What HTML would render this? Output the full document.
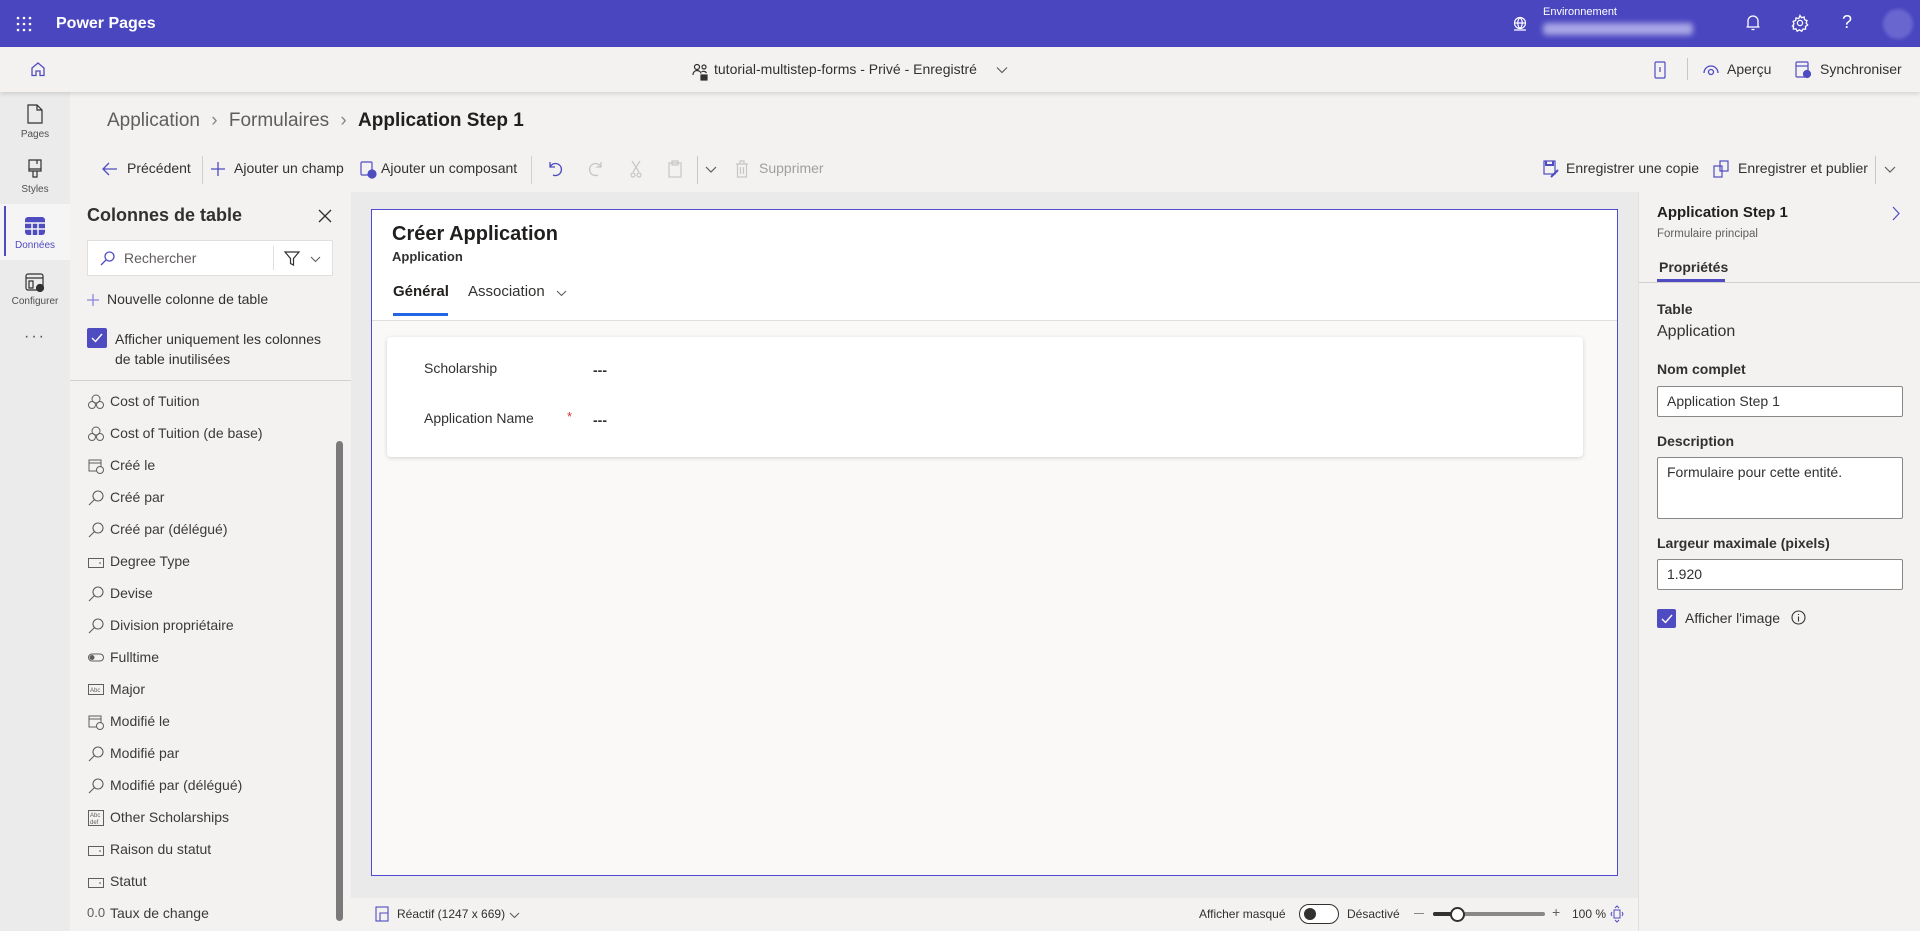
<!DOCTYPE html>
<html><head><meta charset="utf-8"><style>
*{box-sizing:border-box;margin:0;padding:0}
body{width:1920px;height:931px;overflow:hidden;font-family:"Liberation Sans",Arial,sans-serif;background:#f3f2f1;color:#323130;position:relative}
.a{position:absolute;white-space:nowrap}
.top{left:0;top:0;width:1920px;height:47px;background:#4a46c0}
.bar2{left:0;top:47px;width:1920px;height:45px;background:#f3f2f1;box-shadow:0 2px 4px rgba(0,0,0,.12);z-index:2}
.rail{left:0;top:92px;width:70px;height:839px;background:#ebebeb}
.rl{font-size:10px;color:#505050;width:70px;text-align:center;left:0}
.tb{font-size:14px;color:#323130;top:160px}
.li{font-size:14px;color:#3b3a39;left:110px}
.lic{left:88px}
.lab{font-size:14px;font-weight:bold;color:#323130;left:1657px}
.inp{left:1657px;width:246px;background:#fff;border:1px solid #8a8886;border-radius:2px;font-size:14px;color:#323130;padding:0 9px}
svg{position:absolute;overflow:visible}
</style></head><body>
<!-- top bar -->
<div class="a top"></div>
<svg style="left:16px;top:16px" width="16" height="16"><g fill="#fff"><circle cx="2" cy="2" r="1.3"/><circle cx="8" cy="2" r="1.3"/><circle cx="14" cy="2" r="1.3"/><circle cx="2" cy="8" r="1.3"/><circle cx="8" cy="8" r="1.3"/><circle cx="14" cy="8" r="1.3"/><circle cx="2" cy="14" r="1.3"/><circle cx="8" cy="14" r="1.3"/><circle cx="14" cy="14" r="1.3"/></g></svg>
<div class="a" style="left:56px;top:15px;font-size:16px;font-weight:bold;color:#fff">Power Pages</div>
<svg style="left:1512px;top:16px" width="16" height="16" fill="none" stroke="#fff" stroke-width="1.2"><circle cx="8" cy="7" r="5.5"/><path d="M2.5 7h11M8 1.5c-3 3-3 8 0 11M8 1.5c3 3 3 8 0 11M2 14h12"/></svg>
<div class="a" style="left:1543px;top:6px;font-size:11px;color:#fff">Environnement</div>
<div class="a" style="left:1543px;top:23px;width:150px;height:12px;background:#a9a6e6;filter:blur(3px);border-radius:4px"></div>
<svg style="left:1745px;top:14px" width="16" height="18" fill="none" stroke="#fff" stroke-width="1.3"><path d="M3 13V7a5 5 0 0 1 10 0v6zM1.5 13h13M6.5 15.5h3"/></svg>
<svg style="left:1791px;top:14px" width="18" height="18" fill="none" stroke="#fff" stroke-width="1.3"><circle cx="9" cy="9" r="2.6"/><path d="M9 1.5l1.5 2.2 2.6-.7.4 2.6 2.5 1-.9 2.4 1.6 2-2.2 1.4.1 2.7-2.6-.1-1.3 2.3-2.2-1.5-2.3 1.4-1.2-2.4-2.7.1.2-2.7L1.5 12l1.5-2.1-.9-2.5 2.5-.9.4-2.6 2.7.7z"/></svg>
<div class="a" style="left:1842px;top:12px;font-size:18px;color:#fff">?</div>
<div class="a" style="left:1883px;top:9px;width:30px;height:30px;border-radius:50%;background:#6a66d0;filter:blur(1.5px)"></div>
<!-- second bar -->
<div class="a bar2"></div>
<svg style="left:30px;top:61px;z-index:3" width="16" height="16" fill="none" stroke="#4f4bc0" stroke-width="1.3"><path d="M2 7l6-5 6 5v7.5H10V10H6v4.5H2z"/></svg>
<svg style="left:692px;top:63px;z-index:3" width="16" height="18" fill="none" stroke="#323130" stroke-width="1.2"><circle cx="5" cy="4" r="2.5"/><circle cx="12" cy="4" r="2"/><path d="M1 12c0-3 2-4.5 4-4.5s4 1.5 4 3M9.5 9c1-1 4-1 5 1"/><rect x="9" y="12" width="6" height="5" fill="#323130"/></svg>
<div class="a" style="left:714px;top:61px;font-size:14px;color:#323130;z-index:3">tutorial-multistep-forms - Privé - Enregistré</div>
<svg style="left:996px;top:66px;z-index:3" width="12" height="8" fill="none" stroke="#605e5c" stroke-width="1.2"><path d="M1 1.5l5 5 5-5"/></svg>
<svg style="left:1654px;top:61px;z-index:3" width="12" height="18" fill="none" stroke="#4f4bc0" stroke-width="1.2"><rect x="1" y="1" width="10" height="16" rx="1"/><path d="M6 6v5"/></svg>
<div class="a" style="left:1687px;top:58px;width:1px;height:22px;background:#c8c6c4;z-index:3"></div>
<svg style="left:1703px;top:63px;z-index:3" width="16" height="12" fill="none" stroke="#4f4bc0" stroke-width="1.3"><path d="M1 10a7 7 0 0 1 14 0"/><circle cx="8" cy="9" r="2.5"/></svg>
<div class="a" style="left:1727px;top:61px;font-size:14px;z-index:3">Aperçu</div>
<svg style="left:1795px;top:61px;z-index:3" width="16" height="18" fill="none" stroke="#4f4bc0" stroke-width="1.2"><rect x="1" y="1" width="12" height="15" rx="1"/><path d="M1 5h12"/><circle cx="12" cy="13" r="3.5" fill="#4f4bc0"/></svg>
<div class="a" style="left:1820px;top:61px;font-size:14px;z-index:3">Synchroniser</div>
<!-- rail -->
<div class="a rail"></div>
<svg style="left:27px;top:104px" width="16" height="20" fill="none" stroke="#323130" stroke-width="1.2"><path d="M1 1h9l5 5v13H1zM10 1v5h5"/></svg>
<div class="a rl" style="top:129px">Pages</div>
<svg style="left:27px;top:159px" width="16" height="20" fill="none" stroke="#323130" stroke-width="1.2"><path d="M2 1h12v9H2zM2 10v2h12v-2M6 12v6h4v-6M10 1v4"/></svg>
<div class="a rl" style="top:184px">Styles</div>
<div class="a" style="left:0;top:204px;width:70px;height:56px;background:#f5f5f5"></div>
<div class="a" style="left:4px;top:206px;width:2px;height:50px;background:#4f4bc0"></div>
<svg style="left:25px;top:217px" width="20" height="18"><rect x="0" y="0" width="20" height="18" rx="3" fill="#4f4bc0"/><path d="M0 6h20M0 12h20M7 6v12M13 6v12" stroke="#f5f5f5" stroke-width="1.5"/></svg>
<div class="a rl" style="top:240px;color:#4f4bc0">Données</div>
<svg style="left:25px;top:273px" width="20" height="20" fill="none" stroke="#323130" stroke-width="1.2"><rect x="1" y="1" width="17" height="16" rx="2"/><path d="M1 5h17M4 8h4v7H4z"/><circle cx="15" cy="15" r="3.5" fill="#323130"/></svg>
<div class="a rl" style="top:296px">Configurer</div>
<div class="a rl" style="top:328px;font-size:16px;letter-spacing:2px">···</div>
<!-- breadcrumb -->
<div class="a" style="left:107px;top:110px;font-size:19px;color:#605e5c">Application <span style="color:#8a8886;padding:0 6px">›</span> Formulaires <span style="color:#8a8886;padding:0 6px">›</span> <span style="color:#201f1e;font-weight:bold">Application Step 1</span></div>
<!-- toolbar -->
<svg style="left:102px;top:162px" width="16" height="14" fill="none" stroke="#4f4bc0" stroke-width="1.3"><path d="M15 7H1M7 1L1 7l6 6"/></svg>
<div class="a tb" style="left:127px">Précédent</div>
<div class="a" style="left:202px;top:156px;width:1px;height:28px;background:#d2d0ce"></div>
<svg style="left:211px;top:162px" width="14" height="14" stroke="#4f4bc0" stroke-width="1.3"><path d="M7 0v14M0 7h14"/></svg>
<div class="a tb" style="left:234px">Ajouter un champ</div>
<svg style="left:360px;top:161px" width="16" height="17" fill="none" stroke="#4f4bc0" stroke-width="1.2"><rect x="1" y="1" width="11" height="13" rx="1"/><circle cx="12" cy="13" r="4" fill="#4f4bc0"/></svg>
<div class="a tb" style="left:381px">Ajouter un composant</div>
<div class="a" style="left:531px;top:156px;width:1px;height:28px;background:#d2d0ce"></div>
<svg style="left:548px;top:161px" width="14" height="16" fill="none" stroke="#4f4bc0" stroke-width="1.3"><path d="M2 1v5h5M2 6a6 6 0 1 1 3 8"/></svg>
<svg style="left:589px;top:161px" width="14" height="16" fill="none" stroke="#c8c6c4" stroke-width="1.3"><path d="M12 1v5H7M12 6a6 6 0 1 0-3 8"/></svg>
<svg style="left:630px;top:160px" width="12" height="18" fill="none" stroke="#c8c6c4" stroke-width="1.2"><path d="M2 1l7 11M10 1L3 12"/><circle cx="3" cy="15" r="2"/><circle cx="9" cy="15" r="2"/></svg>
<svg style="left:668px;top:160px" width="14" height="18" fill="none" stroke="#c8c6c4" stroke-width="1.2"><rect x="1" y="3" width="12" height="14"/><rect x="4" y="1" width="6" height="4"/></svg>
<div class="a" style="left:697px;top:156px;width:1px;height:28px;background:#c8c6c4"></div>
<svg style="left:705px;top:166px" width="12" height="8" fill="none" stroke="#605e5c" stroke-width="1.2"><path d="M1 1l5 5 5-5"/></svg>
<svg style="left:735px;top:160px" width="14" height="18" fill="none" stroke="#c8c6c4" stroke-width="1.2"><path d="M1 4h12M5 4V1h4v3M2.5 4v13h9V4M5.5 7v7M8.5 7v7"/></svg>
<div class="a tb" style="left:759px;color:#a19f9d">Supprimer</div>
<svg style="left:1543px;top:160px" width="16" height="18" fill="none" stroke="#4f4bc0" stroke-width="1.2"><rect x="1" y="1" width="11" height="13"/><path d="M3 1v4h7V1M8 17l7-7" stroke-width="2"/></svg>
<div class="a tb" style="left:1566px">Enregistrer une copie</div>
<svg style="left:1713px;top:160px" width="16" height="18" fill="none" stroke="#4f4bc0" stroke-width="1.2"><rect x="1" y="6" width="8" height="11"/><rect x="7" y="1" width="8" height="10"/></svg>
<div class="a tb" style="left:1738px">Enregistrer et publier</div>
<div class="a" style="left:1875px;top:156px;width:1px;height:28px;background:#c8c6c4"></div>
<svg style="left:1884px;top:166px" width="12" height="8" fill="none" stroke="#605e5c" stroke-width="1.2"><path d="M1 1l5 5 5-5"/></svg>
<!-- left panel -->
<div class="a" style="left:70px;top:192px;width:281px;height:739px;background:#f3f2f1"></div>
<div class="a" style="left:87px;top:205px;font-size:18px;font-weight:bold;color:#323130">Colonnes de table</div>
<svg style="left:319px;top:210px" width="12" height="12" stroke="#323130" stroke-width="1.3"><path d="M0 0l12 12M12 0L0 12"/></svg>
<div class="a" style="left:87px;top:240px;width:246px;height:36px;background:#fff;border:1px solid #e1dfdd"></div>
<svg style="left:100px;top:251px" width="15" height="15" fill="none" stroke="#4f4bc0" stroke-width="1.3"><circle cx="9.5" cy="5.5" r="4.5"/><path d="M6 9l-5 5"/></svg>
<div class="a" style="left:124px;top:250px;font-size:14px;color:#605e5c">Rechercher</div>
<div class="a" style="left:273px;top:246px;width:1px;height:24px;background:#e1dfdd"></div>
<svg style="left:284px;top:251px" width="16" height="15" fill="none" stroke="#323130" stroke-width="1.2"><path d="M1 1h14l-5.5 6.5V14l-3-1.5V7.5z"/></svg>
<svg style="left:310px;top:256px" width="11" height="7" fill="none" stroke="#605e5c" stroke-width="1.1"><path d="M1 1l4.5 4.5L10 1"/></svg>
<svg style="left:87px;top:294px" width="12" height="12" stroke="#8a86dd" stroke-width="1.3"><path d="M6 0v12M0 6h12"/></svg>
<div class="a" style="left:107px;top:291px;font-size:14px">Nouvelle colonne de table</div>
<div class="a" style="left:87px;top:328px;width:20px;height:20px;background:#4f4bc0;border-radius:2px"></div>
<svg style="left:91px;top:333px" width="12" height="10" fill="none" stroke="#fff" stroke-width="1.4"><path d="M1 5l3.5 3.5L11 1"/></svg>
<div class="a" style="left:115px;top:329px;font-size:14px;line-height:20px">Afficher uniquement les colonnes<br>de table inutilisées</div>
<div class="a" style="left:70px;top:380px;width:281px;height:1px;background:#d2d0ce"></div>
<div class="a" style="left:336px;top:441px;width:7px;height:480px;background:#7a7a7a;border-radius:4px"></div>
<!-- list -->
<div class="a li" style="top:393px">Cost of Tuition</div>
<div class="a li" style="top:425px">Cost of Tuition (de base)</div>
<div class="a li" style="top:457px">Créé le</div>
<div class="a li" style="top:489px">Créé par</div>
<div class="a li" style="top:521px">Créé par (délégué)</div>
<div class="a li" style="top:553px">Degree Type</div>
<div class="a li" style="top:585px">Devise</div>
<div class="a li" style="top:617px">Division propriétaire</div>
<div class="a li" style="top:649px">Fulltime</div>
<div class="a li" style="top:681px">Major</div>
<div class="a li" style="top:713px">Modifié le</div>
<div class="a li" style="top:745px">Modifié par</div>
<div class="a li" style="top:777px">Modifié par (délégué)</div>
<div class="a li" style="top:809px">Other Scholarships</div>
<div class="a li" style="top:841px">Raison du statut</div>
<div class="a li" style="top:873px">Statut</div>
<div class="a li" style="top:905px">Taux de change</div>
<svg class="lic" style="left:88px;top:394px" width="16" height="16" fill="none" stroke="#605e5c" stroke-width="1"><circle cx="8" cy="5" r="4"/><circle cx="4" cy="11" r="3.5"/><circle cx="12" cy="11" r="3.5"/></svg>
<svg style="left:88px;top:426px" width="16" height="16" fill="none" stroke="#605e5c" stroke-width="1"><circle cx="8" cy="5" r="4"/><circle cx="4" cy="11" r="3.5"/><circle cx="12" cy="11" r="3.5"/></svg>
<svg style="left:88px;top:458px" width="16" height="16" fill="none" stroke="#605e5c" stroke-width="1"><rect x="1" y="2" width="12" height="11"/><path d="M1 5h12"/><circle cx="12" cy="12" r="3.5" fill="#f3f2f1"/></svg>
<svg style="left:88px;top:490px" width="16" height="16" fill="none" stroke="#605e5c" stroke-width="1.1"><circle cx="10" cy="6" r="5"/><path d="M6.5 9.5L1 15"/></svg>
<svg style="left:88px;top:522px" width="16" height="16" fill="none" stroke="#605e5c" stroke-width="1.1"><circle cx="10" cy="6" r="5"/><path d="M6.5 9.5L1 15"/></svg>
<svg style="left:88px;top:557px" width="16" height="12" fill="none" stroke="#605e5c" stroke-width="1"><rect x="0.5" y="1.5" width="15" height="9"/><path d="M11 6h2"/></svg>
<svg style="left:88px;top:586px" width="16" height="16" fill="none" stroke="#605e5c" stroke-width="1.1"><circle cx="10" cy="6" r="5"/><path d="M6.5 9.5L1 15"/></svg>
<svg style="left:88px;top:618px" width="16" height="16" fill="none" stroke="#605e5c" stroke-width="1.1"><circle cx="10" cy="6" r="5"/><path d="M6.5 9.5L1 15"/></svg>
<svg style="left:88px;top:653px" width="16" height="10" fill="none" stroke="#605e5c" stroke-width="1"><rect x="0.5" y="1" width="15" height="7" rx="3.5"/><circle cx="4" cy="4.5" r="2" fill="#605e5c"/></svg>
<svg style="left:88px;top:684px" width="16" height="12"><rect x="0.5" y="0.5" width="15" height="10" fill="none" stroke="#605e5c"/><text x="2" y="8" font-size="6" fill="#605e5c" font-family="Liberation Sans">Abc</text></svg>
<svg style="left:88px;top:714px" width="16" height="16" fill="none" stroke="#605e5c" stroke-width="1"><rect x="1" y="2" width="12" height="11"/><path d="M1 5h12"/><circle cx="12" cy="12" r="3.5" fill="#f3f2f1"/></svg>
<svg style="left:88px;top:746px" width="16" height="16" fill="none" stroke="#605e5c" stroke-width="1.1"><circle cx="10" cy="6" r="5"/><path d="M6.5 9.5L1 15"/></svg>
<svg style="left:88px;top:778px" width="16" height="16" fill="none" stroke="#605e5c" stroke-width="1.1"><circle cx="10" cy="6" r="5"/><path d="M6.5 9.5L1 15"/></svg>
<svg style="left:88px;top:810px" width="16" height="16"><rect x="0.5" y="0.5" width="15" height="15" fill="none" stroke="#605e5c"/><text x="2" y="7" font-size="6" fill="#605e5c" font-family="Liberation Sans">Abc</text><text x="2" y="14" font-size="6" fill="#605e5c" font-family="Liberation Sans">def</text></svg>
<svg style="left:88px;top:845px" width="16" height="12" fill="none" stroke="#605e5c" stroke-width="1"><rect x="0.5" y="1.5" width="15" height="9"/><path d="M11 6h2"/></svg>
<svg style="left:88px;top:877px" width="16" height="12" fill="none" stroke="#605e5c" stroke-width="1"><rect x="0.5" y="1.5" width="15" height="9"/><path d="M11 6h2"/></svg>
<div class="a" style="left:87px;top:905px;font-size:13px;color:#605e5c">0.0</div>
<!-- canvas -->
<div class="a" style="left:351px;top:192px;width:1287px;height:706px;background:#eaeaea"></div>
<div class="a" style="left:371px;top:209px;width:1247px;height:667px;background:#faf9f8;border:1px solid #4f4bd0"></div>
<div class="a" style="left:372px;top:210px;width:1245px;height:111px;background:#fff;border-bottom:1px solid #e1dfdd"></div>
<div class="a" style="left:392px;top:223px;font-size:20px;font-weight:bold;color:#201f1e">Créer Application</div>
<div class="a" style="left:392px;top:249px;font-size:13px;font-weight:bold;color:#323130">Application</div>
<div class="a" style="left:393px;top:283px;font-size:15px;color:#201f1e;font-weight:bold">Général</div>
<div class="a" style="left:393px;top:313px;width:55px;height:3px;background:#2266e3"></div>
<div class="a" style="left:468px;top:283px;font-size:15px;color:#323130">Association</div>
<svg style="left:556px;top:290px" width="11" height="7" fill="none" stroke="#605e5c" stroke-width="1.1"><path d="M1 1l4.5 4.5L10 1"/></svg>
<div class="a" style="left:387px;top:337px;width:1196px;height:120px;background:#fff;border-radius:4px;box-shadow:0 1px 4px rgba(0,0,0,.16)"></div>
<div class="a" style="left:424px;top:360px;font-size:14px;color:#323130">Scholarship</div>
<div class="a" style="left:593px;top:362px;font-size:14px;color:#323130;font-weight:bold">---</div>
<div class="a" style="left:424px;top:410px;font-size:14px;color:#323130">Application Name</div>
<div class="a" style="left:567px;top:409px;font-size:13px;color:#d13438">*</div>
<div class="a" style="left:593px;top:412px;font-size:14px;color:#323130;font-weight:bold">---</div>
<!-- bottom bar -->
<div class="a" style="left:351px;top:898px;width:1287px;height:33px;background:#f3f2f1"></div>
<svg style="left:375px;top:906px" width="14" height="16" fill="none" stroke="#4f4bc0" stroke-width="1.1"><rect x="1" y="1" width="12" height="14"/><path d="M5 15V7h8"/></svg>
<div class="a" style="left:397px;top:907px;font-size:12px;color:#323130">Réactif (1247 x 669)</div>
<svg style="left:509px;top:912px" width="11" height="7" fill="none" stroke="#605e5c" stroke-width="1.1"><path d="M1 1l4.5 4.5L10 1"/></svg>
<div class="a" style="left:1199px;top:907px;font-size:12px">Afficher masqué</div>
<div class="a" style="left:1299px;top:904px;width:40px;height:20px;border:1px solid #323130;border-radius:10px;background:#fff"></div>
<div class="a" style="left:1304px;top:908px;width:12px;height:12px;border-radius:50%;background:#323130"></div>
<div class="a" style="left:1347px;top:907px;font-size:12px">Désactivé</div>
<div class="a" style="left:1414px;top:913px;width:10px;height:1px;background:#8a8886"></div>
<div class="a" style="left:1433px;top:912px;width:112px;height:4px;background:#8a8886;border-radius:2px"></div>
<div class="a" style="left:1433px;top:912px;width:24px;height:4px;background:#323130;border-radius:2px"></div>
<div class="a" style="left:1450px;top:907px;width:15px;height:15px;border-radius:50%;background:#fff;border:2px solid #323130"></div>
<div class="a" style="left:1552px;top:904px;font-size:14px;color:#605e5c">+</div>
<div class="a" style="left:1572px;top:907px;font-size:12px">100 %</div>
<svg style="left:1611px;top:905px" width="12" height="18" fill="none" stroke="#4f4bc0" stroke-width="1"><rect x="3" y="5" width="6" height="8"/><path d="M4 3l2-2 2 2M4 15l2 2 2-2M1 7l-1 2 1 2M11 7l1 2-1 2"/></svg>
<!-- right panel -->
<div class="a" style="left:1638px;top:192px;width:282px;height:739px;background:#f3f2f1;border-left:1px solid #e1dfdd"></div>
<div class="a" style="left:1657px;top:204px;font-size:15px;font-weight:bold;color:#201f1e">Application Step 1</div>
<svg style="left:1892px;top:206px" width="8" height="15" fill="none" stroke="#4f4bc0" stroke-width="1.2"><path d="M1 1l6 6.5L1 14"/></svg>
<div class="a" style="left:1657px;top:228px;font-size:11.5px;color:#605e5c">Formulaire principal</div>
<div class="a" style="left:1659px;top:259px;font-size:14px;font-weight:bold;color:#323130">Propriétés</div>
<div class="a" style="left:1657px;top:279px;width:68px;height:3px;background:#4f4bc0"></div>
<div class="a" style="left:1639px;top:282px;width:281px;height:1px;background:#d2d0ce"></div>
<div class="a lab" style="top:301px">Table</div>
<div class="a" style="left:1657px;top:323px;font-size:16px;color:#323130">Application</div>
<div class="a lab" style="top:361px">Nom complet</div>
<div class="a inp" style="top:386px;height:31px;line-height:29px">Application Step 1</div>
<div class="a lab" style="top:433px">Description</div>
<div class="a inp" style="top:457px;height:62px;padding-top:6px">Formulaire pour cette entité.</div>
<div class="a lab" style="top:535px">Largeur maximale (pixels)</div>
<div class="a inp" style="top:559px;height:31px;line-height:29px">1.920</div>
<div class="a" style="left:1657px;top:609px;width:19px;height:19px;background:#4f4bc0;border-radius:2px"></div>
<svg style="left:1661px;top:614px" width="12" height="10" fill="none" stroke="#fff" stroke-width="1.4"><path d="M1 5l3.5 3.5L11 1"/></svg>
<div class="a" style="left:1685px;top:610px;font-size:14px">Afficher l'image</div>
<svg style="left:1791px;top:610px" width="15" height="15" fill="none" stroke="#323130" stroke-width="1.1"><circle cx="7.5" cy="7.5" r="6.5"/><path d="M7.5 6.5v5M7.5 4v1"/></svg>
</body></html>
